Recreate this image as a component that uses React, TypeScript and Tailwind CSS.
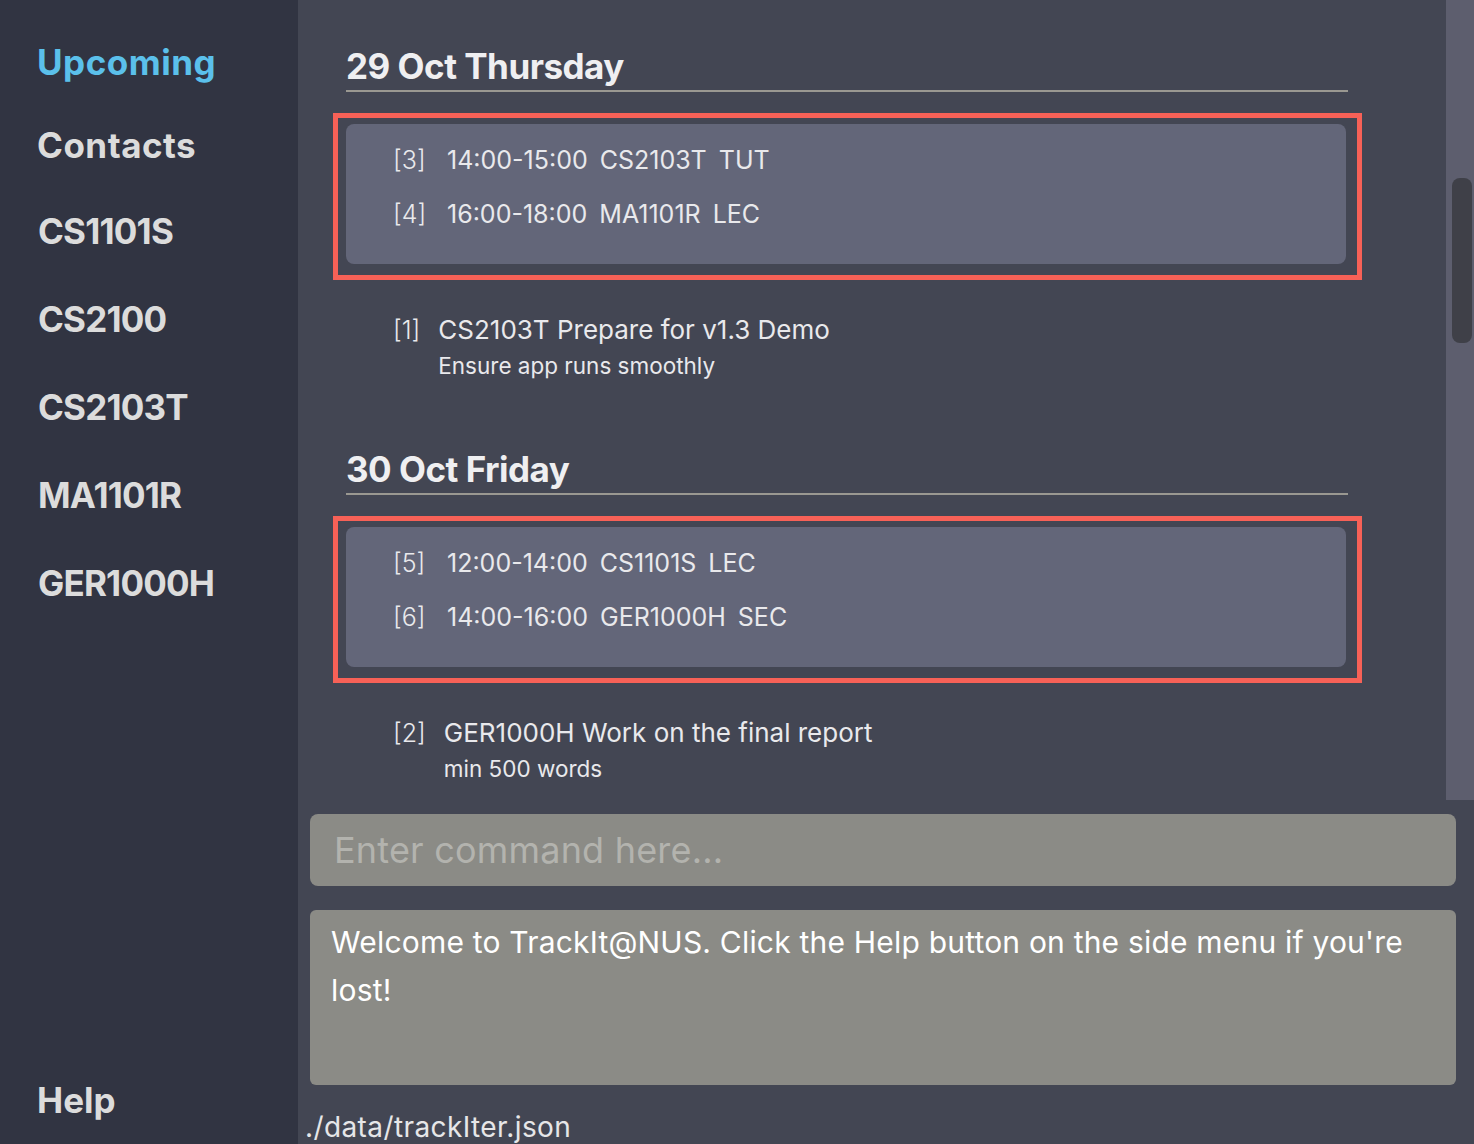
import React from 'react';

const font = { fontFamily: 'Inter, "Noto Sans", sans-serif' };

const modules = ['CS1101S', 'CS2100', 'CS2103T', 'MA1101R', 'GER1000H'];

type Lesson = { idx: number; time: string; code: string; kind: string };
type Task = { idx: number; title: string; note: string };

const days: { title: string; lessons: Lesson[]; tasks: Task[] }[] = [
  {
    title: '29 Oct Thursday',
    lessons: [
      { idx: 3, time: '14:00-15:00', code: 'CS2103T', kind: 'TUT' },
      { idx: 4, time: '16:00-18:00', code: 'MA1101R', kind: 'LEC' },
    ],
    tasks: [{ idx: 1, title: 'CS2103T Prepare for v1.3 Demo', note: 'Ensure app runs smoothly' }],
  },
  {
    title: '30 Oct Friday',
    lessons: [
      { idx: 5, time: '12:00-14:00', code: 'CS1101S', kind: 'LEC' },
      { idx: 6, time: '14:00-16:00', code: 'GER1000H', kind: 'SEC' },
    ],
    tasks: [{ idx: 2, title: 'GER1000H Work on the final report', note: 'min 500 words' }],
  },
];

function DaySection({ day, first }: { day: (typeof days)[number]; first: boolean }) {
  return (
    <div className={first ? 'pt-[42px]' : 'pt-[64px]'}>
      {/* 날짜 헤더 */}
      <div className="mr-[98px] border-b-2 border-[#9a9891]">
        <h2 className="text-[35px] font-bold leading-[48px] tracking-[-0.5px] text-[#efeff1]">{day.title}</h2>
      </div>

      {/* 수업 목록 (강조 박스) */}
      <div className="-ml-[13px] mr-[84px] mt-[21px] border-[5px] border-[#f76157] pb-[11px] pl-[8px] pr-[11px] pt-[6px]">
        <div className="rounded-lg bg-[#636679] pb-[32px] pl-[47px] pt-[18px]">
          {day.lessons.map((l, i) => (
            <div key={l.idx} className={`flex text-[25px] leading-[36px] text-[#e9e9ec] ${i > 0 ? 'mt-[18px]' : ''}`}>
              <span className="w-[54px] font-light">[{l.idx}]</span>
              <span>{l.time}</span>
              <span className="ml-3">{l.code}</span>
              <span className="ml-3">{l.kind}</span>
            </div>
          ))}
        </div>
      </div>

      {/* 할 일 목록 */}
      {day.tasks.map((t) => (
        <div key={t.idx} className="mt-[32px] flex pl-[47px] text-[#e9e9ec]">
          <span className="mr-[18px] text-[25px] font-light leading-[36px]">[{t.idx}]</span>
          <div>
            <div className="text-[26px] leading-[36px]">{t.title}</div>
            <div className="mt-[3px] text-[22.5px] leading-[30px]">{t.note}</div>
          </div>
        </div>
      ))}
    </div>
  );
}

export default function App() {
  return (
    <div className="flex h-[1144px] w-[1474px] overflow-hidden" style={font}>
      {/* 사이드 메뉴 */}
      <aside className="flex w-[298px] shrink-0 flex-col bg-[#313442] pl-[37px] pt-[20px] pb-[20px]">
        <div className="flex h-[84px] items-center text-[35px] font-bold tracking-[0.5px] text-[#5bc0eb]">Upcoming</div>
        <div className="flex h-[83px] items-center text-[35px] font-bold tracking-[0.5px] text-[#dcdcdc]">Contacts</div>
        {modules.map((m) => (
          <div key={m} className="flex h-[88px] items-center pl-[1px] text-[35px] font-bold tracking-[-0.8px] text-[#dcdcdc]">
            {m}
          </div>
        ))}
        <div className="mt-auto flex h-[48px] items-center text-[35px] font-bold text-[#dcdcdc]">Help</div>
      </aside>

      {/* 메인 영역 */}
      <main className="flex min-w-0 flex-1 flex-col bg-[#434653]">
        <div className="flex h-[800px] shrink-0">
          <div className="flex-1 overflow-hidden pl-[48px]">
            {days.map((d, i) => (
              <DaySection key={d.title} day={d} first={i === 0} />
            ))}
          </div>
          <div className="w-[28px] shrink-0 bg-[#5d5e6e] pl-[6px] pr-[2px] pt-[178px]">
            <div className="h-[165px] rounded-lg bg-[#3f4048]" />
          </div>
        </div>

        <div className="pl-[12px] pr-[18px] pt-[14px]">
          <div className="flex h-[72px] items-center rounded-lg bg-[#8b8b86] pl-[24px] text-[36px] tracking-[0.2px] text-[#b3b3ae]">
            Enter command here...
          </div>
          <div className="mt-[24px] h-[175px] rounded-md bg-[#8b8b86] pl-[21px] pt-[8px] text-[30px] leading-[48px] tracking-[0.2px] text-white">
            <span className="whitespace-nowrap">Welcome to TrackIt@NUS. Click the Help button on the side menu if you're</span>
            <br />
            lost!
          </div>
        </div>
        <div className="pl-[7px] pt-[24px] text-[28px] leading-[36px] tracking-[0.4px] text-[#e6e6e8]">./data/trackIter.json</div>
      </main>
    </div>
  );
}
